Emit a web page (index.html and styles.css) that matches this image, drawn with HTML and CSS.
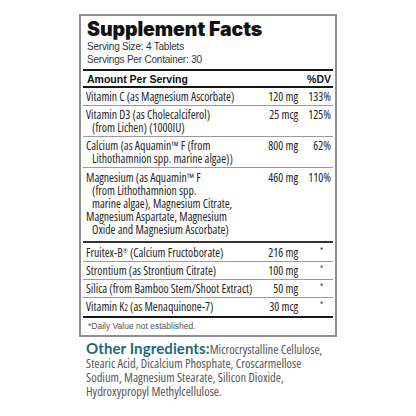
FILE: index.html
```html
<!DOCTYPE html>
<html lang="en">
<head>
<meta charset="utf-8">
<title>Supplement Facts</title>
<link rel="stylesheet" href="styles.css">
</head>
<body>
<div class="panel">
  <div class="head">
    <h1 class="title">Supplement Facts</h1>
    <div class="serving">Serving Size: 4 Tablets</div>
    <div class="serving">Servings Per Container: 30</div>
  </div>
  <div class="colhead">
    <span>Amount Per Serving</span>
    <span>%DV</span>
  </div>
  <div class="row">
    <div class="name"><span class="l">Vitamin C (as Magnesium Ascorbate)</span></div>
    <div class="amt">120 mg</div>
    <div class="dv">133%</div>
  </div>
  <div class="row">
    <div class="name"><span class="l">Vitamin D3 (as Cholecalciferol)</span><span class="l ind">(from Lichen) (1000IU)</span></div>
    <div class="amt">25 mcg</div>
    <div class="dv">125%</div>
  </div>
  <div class="row">
    <div class="name"><span class="l">Calcium (as Aquamin™ F (from</span><span class="l ind">Lithothamnion spp. marine algae))</span></div>
    <div class="amt">800 mg</div>
    <div class="dv">62%</div>
  </div>
  <div class="row heavy">
    <div class="name"><span class="l">Magnesium (as Aquamin™ F</span><span class="l ind">(from Lithothamnion spp.</span><span class="l ind">marine algae), Magnesium Citrate,</span><span class="l">Magnesium Aspartate, Magnesium</span><span class="l ind">Oxide and Magnesium Ascorbate)</span></div>
    <div class="amt">460 mg</div>
    <div class="dv">110%</div>
  </div>
  <div class="row first-after">
    <div class="name"><span class="l">Fruitex-B<sup class="reg">®</sup> (Calcium Fructoborate)</span></div>
    <div class="amt">216 mg</div>
    <div class="dv star">*</div>
  </div>
  <div class="row">
    <div class="name"><span class="l">Strontium (as Strontium Citrate)</span></div>
    <div class="amt">100 mg</div>
    <div class="dv star">*</div>
  </div>
  <div class="row">
    <div class="name"><span class="l">Silica (from Bamboo Stem/Shoot Extract)</span></div>
    <div class="amt">50 mg</div>
    <div class="dv star">*</div>
  </div>
  <div class="row last">
    <div class="name"><span class="l">Vitamin K<span class="sub">2</span> (as Menaquinone-7)</span></div>
    <div class="amt">30 mcg</div>
    <div class="dv star">*</div>
  </div>
  <div class="foot">*Daily Value not established.</div>
</div>
<p class="other"><span class="other-label">Other Ingredients:</span>Microcrystalline Cellulose,<br>Stearic Acid, Dicalcium Phosphate, Croscarmellose<br>Sodium, Magnesium Stearate, Silicon Dioxide,<br>Hydroxypropyl Methylcellulose.</p>
</body>
</html>
```
FILE: styles.css
```css
body {
  margin: 0;
  padding: 14px 0 0 79px;
  background: #fff;
  color: #2a2a2a;
  font-family: "Liberation Sans", Arial, sans-serif;
}

.panel {
  box-sizing: border-box;
  width: 258px;
  border: 2px solid #8f8f8f;
  padding: 2px 2px 3px 2px;
}

.head {
  padding: 1px 0 3px 4px;
  border-bottom: 2px solid #161616;
}

.title {
  margin: 0 0 1px 0;
  font-family: Inter, "Liberation Sans", sans-serif;
  font-weight: 900;
  font-size: 19.5px;
  line-height: 20px;
  color: #111;
  letter-spacing: -0.1px;
}

.serving {
  font-size: 10px;
  line-height: 13px;
  color: #333;
  letter-spacing: -0.2px;
}

.colhead {
  display: flex;
  justify-content: space-between;
  padding: 2px 2px 0 4px;
  border-bottom: 2px solid #161616;
  font-weight: 700;
  font-size: 10.5px;
  line-height: 13px;
  color: #111;
}

.row {
  display: grid;
  grid-template-columns: 1fr 42px 35px;
  padding: 2px 0 2px 3px;
  border-bottom: 1px solid #9a9a9a;
  font-family: "Open Sans", "Liberation Sans", sans-serif;
  font-stretch: 87%;
  font-weight: 450;
  font-size: 11.8px;
  line-height: 13px;
  color: #262626;
}

.row.heavy {
  padding-top: 3px;
  padding-bottom: 5px;
  border-bottom: 2px solid #333;
}

.row.first-after {
  padding-top: 3px;
}

.row.last {
  border-bottom: 2px solid #161616;
}

.name .l {
  display: block;
  white-space: nowrap;
}

.name .ind {
  padding-left: 6px;
}

.amt {
  text-align: right;
  white-space: nowrap;
}

.dv {
  text-align: right;
  padding-right: 2px;
}

.dv.star {
  padding-right: 10px;
  font-size: 8px;
  line-height: 10px;
}

.reg {
  font-size: 6px;
  vertical-align: 4px;
  line-height: 0;
}

.sub {
  font-size: 8px;
}

.foot {
  padding: 3px 0 0 5px;
  font-size: 8.5px;
  line-height: 11px;
  color: #555;
}

.other {
  margin: 4px 0 0 7px;
  font-family: "Open Sans", "Liberation Sans", sans-serif;
  font-stretch: 87.2%;
  font-size: 12.5px;
  line-height: 14px;
  color: #555;
}

.other-label {
  font-family: Lato, "Open Sans", sans-serif;
  font-weight: 700;
  font-size: 15px;
  letter-spacing: 0.1px;
  color: #1c6a79;
}
```
